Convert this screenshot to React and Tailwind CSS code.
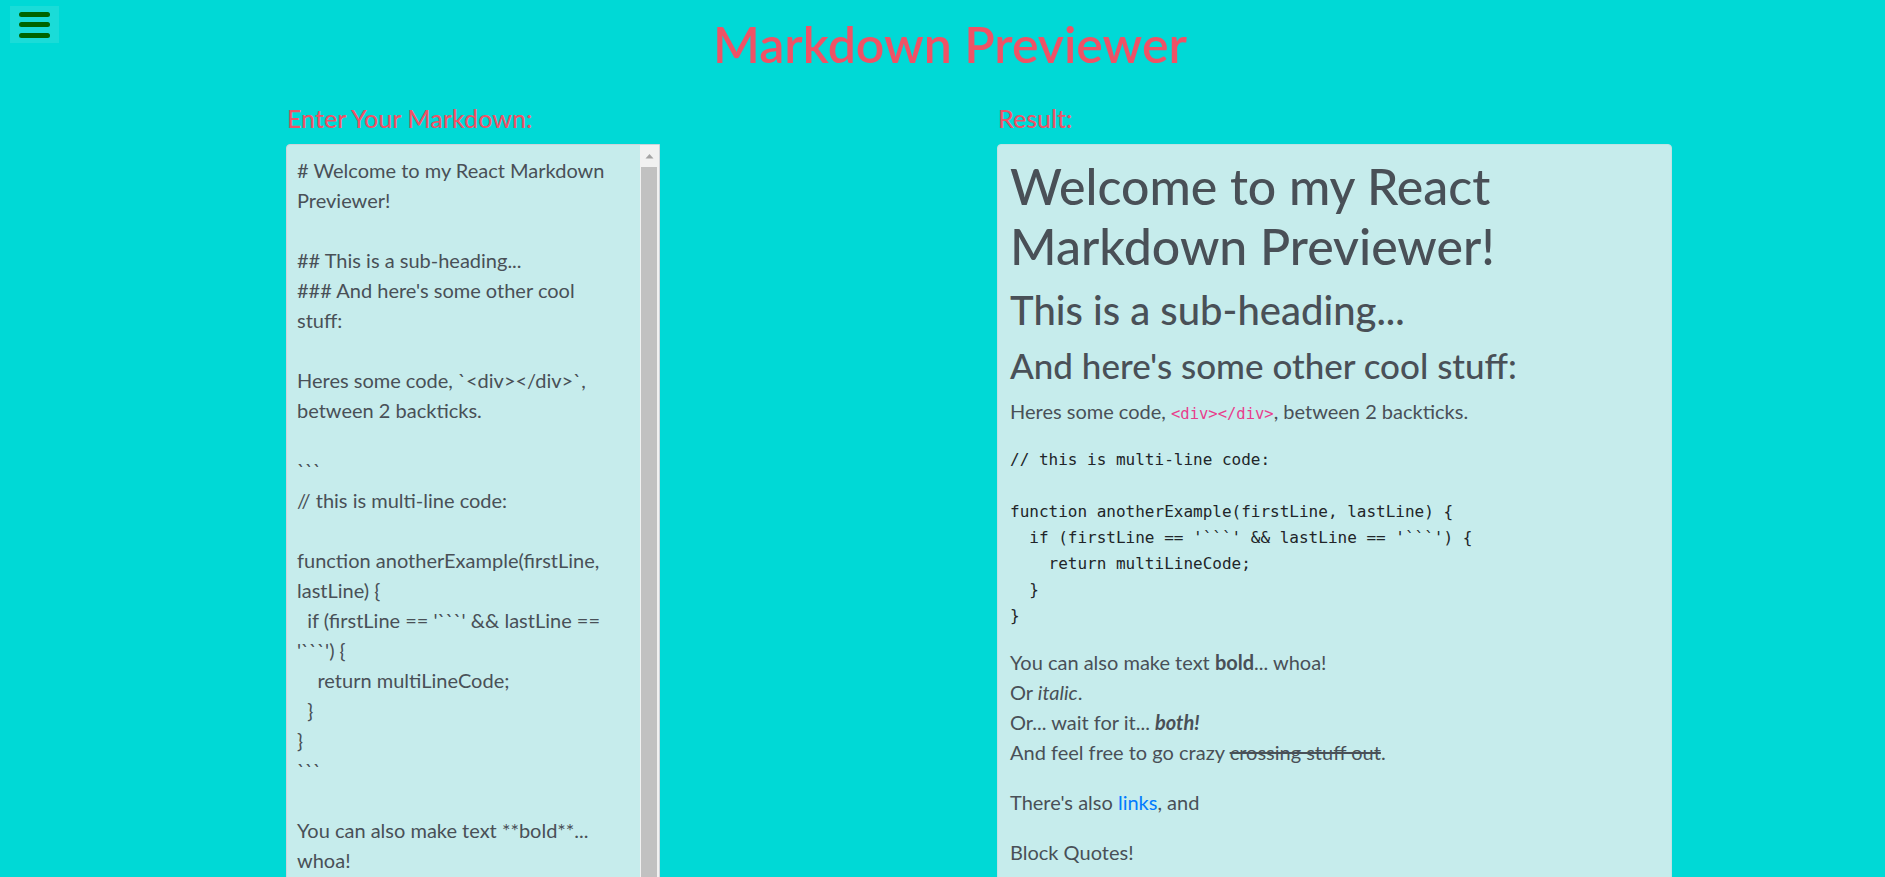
const sourceLines = [
  "# Welcome to my React Markdown",
  "Previewer!",
  "",
  "## This is a sub-heading...",
  "### And here's some other cool",
  "stuff:",
  "",
  "Heres some code, `<div></div>`,",
  "between 2 backticks.",
  "",
  "```",
  "// this is multi-line code:",
  "",
  "function anotherExample(firstLine,",
  "lastLine) {",
  "  if (firstLine == '```' && lastLine ==",
  "'```') {",
  "    return multiLineCode;",
  "  }",
  "}",
  "```",
  "",
  "You can also make text **bold**...",
  "whoa!",
  "Or _italic_.",
  "Or... wait for it...",
];

const codeBlock = `// this is multi-line code:

function anotherExample(firstLine, lastLine) {
  if (firstLine == '\`\`\`' && lastLine == '\`\`\`') {
    return multiLineCode;
  }
}`;

const Editor = () => (
  <div className="flex h-[760px] w-[374px] overflow-hidden rounded-tl-[4px] border border-[#ced4da] bg-[#c6ecec]">
    <div className="flex-1 whitespace-pre pl-[10px] pt-[10px] text-[20px] leading-[30px] text-[#495057]">
      {sourceLines.map((line, i) => (
        <div key={i} className="h-[30px]">
          {line}
        </div>
      ))}
    </div>
    <div className="flex w-[19px] flex-col bg-[#f1f1f1]">
      <div className="flex h-[22px] items-center justify-center">
        <svg width="9" height="6" viewBox="0 0 9 6">
          <path d="M0.5 5.5 L4.5 1 L8.5 5.5 Z" fill="#a3a3a3" />
        </svg>
      </div>
      <div className="ml-[1px] mr-[2px] flex-1 bg-[#c1c1c1]" />
    </div>
  </div>
);

const Preview = () => (
  <div className="h-[760px] w-[675px] overflow-hidden rounded-t-[4px] border border-[#bfe3e3] bg-[#c6ecec] pl-[12px] pr-[10px] pt-[11px] text-[20px] leading-[30px] text-[#495057]">
    <h1 className="mb-[10px] text-[50px] font-medium leading-[60px]">
      Welcome to my React Markdown Previewer!
    </h1>
    <h2 className="mb-[10px] text-[40px] font-medium leading-[48px]">
      This is a sub-heading...
    </h2>
    <h3 className="mb-[10px] text-[35px] font-medium leading-[42px]">
      And here's some other cool stuff:
    </h3>
    <p className="mb-[18px]">
      Heres some code,{" "}
      <code className="font-['DejaVu_Sans_Mono',monospace] text-[15.5px] text-[#e83e8c]">
        {"<div></div>"}
      </code>
      , between 2 backticks.
    </p>
    <pre className="mb-[18px] font-['DejaVu_Sans_Mono',monospace] text-[16px] leading-[26px] text-[#212529]">
      {codeBlock}
    </pre>
    <p className="mb-[20px]">
      You can also make text <strong className="font-bold">bold</strong>... whoa!
      <br />
      Or <em>italic</em>.
      <br />
      Or... wait for it...{" "}
      <strong className="font-bold">
        <em>both!</em>
      </strong>
      <br />
      And feel free to go crazy <del>crossing stuff out</del>.
    </p>
    <p className="mb-[20px]">
      There's also <a className="text-[#007bff]">links</a>, and
    </p>
    <blockquote className="mb-[20px]">
      <p>Block Quotes!</p>
    </blockquote>
  </div>
);

export default function App() {
  return (
    <div className="relative h-screen overflow-hidden bg-[#00d9d6] font-['Lato',sans-serif]">
      <button className="absolute left-[10px] top-[6px] flex h-[37px] w-[49px] flex-col items-center justify-center gap-[5.5px] bg-[#1adcd8]">
        <span className="h-[5px] w-[31px] rounded-full bg-[#006400]" />
        <span className="h-[5px] w-[31px] rounded-full bg-[#006400]" />
        <span className="h-[5px] w-[31px] rounded-full bg-[#006400]" />
      </button>
      <h1 className="pl-[15px] pt-[14px] text-center text-[50px] font-semibold leading-[60px] text-[#ef5266]">
        Markdown Previewer
      </h1>
      <div className="flex gap-[337px] pl-[286px] pt-[29px]">
        <div className="flex flex-col">
          <h5 className="mb-[11px] pl-[1px] text-[25px] font-medium leading-[30px] text-[#ef5266]">
            Enter Your Markdown:
          </h5>
          <Editor />
        </div>
        <div className="flex flex-col">
          <h5 className="mb-[11px] pl-[1px] text-[25px] font-medium leading-[30px] text-[#ef5266]">
            Result:
          </h5>
          <Preview />
        </div>
      </div>
    </div>
  );
}
